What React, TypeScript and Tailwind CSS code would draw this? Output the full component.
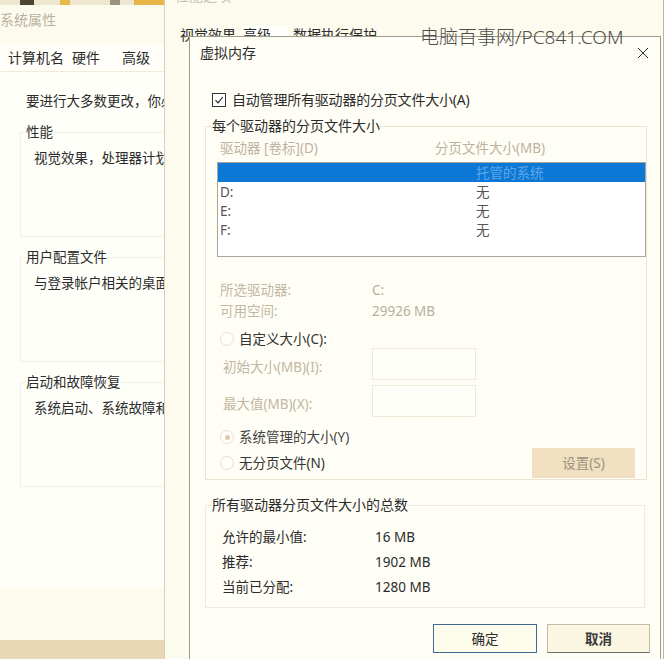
function Radio({ checked = false }: { checked?: boolean }) {
  return (
    <span className="flex h-[14px] w-[14px] shrink-0 items-center justify-center rounded-full border border-[#e6dfcc] bg-[#fffef9]">
      {checked && <span className="h-[5px] w-[5px] rounded-full bg-[#dccbab]" />}
    </span>
  );
}

const sysGroups = [
  { title: "性能", text: "视觉效果，处理器计划，内存使用，以及虚拟内存" },
  { title: "用户配置文件", text: "与登录帐户相关的桌面设置" },
  { title: "启动和故障恢复", text: "系统启动、系统故障和调试信息" },
];

const drives = [
  { name: "", size: "托管的系统", selected: true },
  { name: "D:", size: "无" },
  { name: "E:", size: "无" },
  { name: "F:", size: "无" },
];

const totals = [
  { label: "允许的最小值:", value: "16 MB" },
  { label: "推荐:", value: "1902 MB" },
  { label: "当前已分配:", value: "1280 MB" },
];

export default function App() {
  return (
    <div className="relative h-[659px] w-[664px] overflow-hidden bg-[#fdfbee] font-['Noto_Sans','Noto_Sans_CJK_SC',sans-serif] text-[13.5px] leading-[18px] text-[#2b2b2b]">
      {/* 系统属性 */}
      <div className="absolute left-0 top-0 flex h-full w-[165px] flex-col overflow-hidden border-r border-[#d8d0b8] bg-[#fdfbee]">
        <div className="flex h-[5px] shrink-0 bg-[#efe6cf]">
          <span className="ml-[20px] w-[14px] bg-[#4d4536]" />
          <span className="ml-[26px] w-[10px] bg-[#e5b84a]" />
          <span className="ml-[40px] w-[10px] bg-[#9a917f]" />
          <span className="ml-[14px] w-[30px] bg-[#e9b447]" />
        </div>
        <div className="flex h-[30px] shrink-0 items-center text-[14px] text-[#bab19d]">
          系统属性
        </div>
        <div className="mt-[10px] flex h-[26px] shrink-0 items-center whitespace-nowrap bg-[#fffef8] pl-[8px] text-[14px]">
          <span className="w-[64px]">计算机名</span>
          <span className="w-[50px]">硬件</span>
          <span>高级</span>
        </div>
        <div className="h-[517px] shrink-0 whitespace-nowrap border-t border-[#f1ebd9] bg-[#fffffa] pt-[20px]">
          <p className="pl-[26px]">要进行大多数更改，你必须作为管理员登录。</p>
          {sysGroups.map((g, i) => (
            <fieldset
              key={g.title}
              className={`ml-[20px] h-[114px] w-[300px] border border-[#f5f0e3] ${i === 0 ? "mt-[13px]" : "mt-[11px]"}`}
            >
              <legend className="ml-[5px]">{g.title}</legend>
              <p className="pl-[13px] pt-[8px]">{g.text}</p>
            </fieldset>
          ))}
        </div>
        <div className="flex-1" />
        <div className="h-[19px] shrink-0 bg-[#e8d8b6]" />
      </div>

      {/* 性能选项 */}
      <div className="absolute left-[165px] top-0 h-full w-[499px] whitespace-nowrap border-r border-[#bdb5a0] bg-[#fdfbee]">
        <div className="-mt-[13px] h-[18px] pl-[10px] text-[14px] text-[#c9c0ad]">性能选项</div>
        <div className="mt-[19px] flex h-[21px] items-center pl-[15px] text-[14px]">
          <span className="w-[60px]">视觉效果</span>
          <span className="w-[48px] bg-[#fffffb] pl-[3px]">高级</span>
          <span className="pl-[5px]">数据执行保护</span>
        </div>
      </div>

      {/* 虚拟内存 */}
      <div className="absolute left-[189px] top-[36px] flex h-[640px] w-[472px] flex-col whitespace-nowrap border border-[#a29c8c] bg-[#fffef6]">
        <div className="flex h-[32px] shrink-0 items-center justify-between pl-[10px] pr-[11px]">
          <span className="text-[14px]">虚拟内存</span>
          <svg width="12" height="12" viewBox="0 0 12 12" fill="none" stroke="#333" strokeWidth="1">
            <path d="M1 1 L11 11 M11 1 L1 11" />
          </svg>
        </div>

        <div className="mt-[21px] flex h-[20px] items-center gap-[6px] pl-[22px] text-[14px]">
          <span className="flex h-[14px] w-[14px] items-center justify-center border border-[#333] bg-white">
            <svg width="10" height="10" viewBox="0 0 10 10" fill="none" stroke="#222" strokeWidth="1.1">
              <path d="M1.5 5.2 L4 7.8 L8.8 2" />
            </svg>
          </span>
          <span className="tracking-[-0.2px]">自动管理所有驱动器的分页文件大小(A)</span>
        </div>

        <fieldset className="ml-[15px] mt-[7px] w-[442px] border border-[#ebe4d1] pb-[1px]">
          <legend className="ml-[6px] text-[14px]">每个驱动器的分页文件大小</legend>
          <div className="mt-[4px] flex pl-[14px] text-[#bdb29d]">
            <span className="w-[215px]">驱动器 [卷标](D)</span>
            <span>分页文件大小(MB)</span>
          </div>
          <div className="ml-[11px] mt-[5px] h-[95px] w-[429px] border border-[#aaa69c] bg-white">
            {drives.map((d) => (
              <div
                key={d.size + d.name}
                className={`flex h-[19px] items-center pl-[2px] ${d.selected ? "bg-[#0b78d6] text-[#5fa6e6]" : "text-[#555]"}`}
              >
                <span className="w-[256px]">{d.name}</span>
                <span>{d.size}</span>
              </div>
            ))}
          </div>

          <div className="mt-[23px] pl-[14px] leading-[21px] text-[#c1b7a3]">
            <div className="flex">
              <span className="w-[152px]">所选驱动器:</span>
              <span className="text-[#b8ae9b]">C:</span>
            </div>
            <div className="flex">
              <span className="w-[152px]">可用空间:</span>
              <span className="text-[#b8ae9b]">29926 MB</span>
            </div>
          </div>

          <div className="mt-[8px] flex h-[18px] items-center gap-[5px] pl-[14px] text-[#333]">
            <Radio />
            <span>自定义大小(C):</span>
          </div>
          <div className="flex h-[32px] items-center pl-[17px] text-[#c1b7a3]">
            <span className="w-[149px] pt-[6px]">初始大小(MB)(I):</span>
            <span className="h-[32px] w-[104px] border border-[#efe9d8] bg-[#fffffa]" />
          </div>
          <div className="mt-[5px] flex h-[32px] items-center pl-[17px] text-[#c1b7a3]">
            <span className="w-[149px] pt-[6px]">最大值(MB)(X):</span>
            <span className="h-[32px] w-[104px] border border-[#efe9d8] bg-[#fffffa]" />
          </div>

          <div className="mt-[10px] flex h-[20px] items-center gap-[5px] pl-[14px] text-[#444]">
            <Radio checked />
            <span>系统管理的大小(Y)</span>
          </div>
          <div className="mt-[1px] flex h-[30px] items-center justify-between pl-[14px] pr-[11px]">
            <div className="flex items-center gap-[5px] text-[#333]">
              <Radio />
              <span>无分页文件(N)</span>
            </div>
            <button className="flex h-[30px] w-[103px] items-center justify-center bg-[#f1dfc2] text-[#9d917c]">
              设置(S)
            </button>
          </div>
        </fieldset>

        <fieldset className="ml-[15px] mt-[16px] w-[440px] border border-[#f0eadb] pb-[7px]">
          <legend className="ml-[6px] text-[14px]">所有驱动器分页文件大小的总数</legend>
          <div className="mt-[11px] pl-[16px] leading-[25px]">
            {totals.map((t) => (
              <div key={t.label} className="flex">
                <span className="w-[153px]">{t.label}</span>
                <span>{t.value}</span>
              </div>
            ))}
          </div>
        </fieldset>

        <div className="mt-[16px] flex justify-end gap-[10px] pr-[10px]">
          <button className="flex h-[29px] w-[104px] items-center justify-center border border-[#3f6a92] bg-[#fdfbea]">
            确定
          </button>
          <button className="flex h-[29px] w-[103px] items-center justify-center border border-[#c3bba6] border-b-[#6d6a62] bg-[#fbf6e2] font-bold text-[#3a3a3a]">
            取消
          </button>
        </div>
      </div>

      {/* watermark */}
      <div className="absolute left-[420px] top-[26px] whitespace-nowrap text-[19px] font-light leading-[22px] text-[#4d4d4d]">
        电脑百事网/PC841.COM
      </div>
    </div>
  );
}
